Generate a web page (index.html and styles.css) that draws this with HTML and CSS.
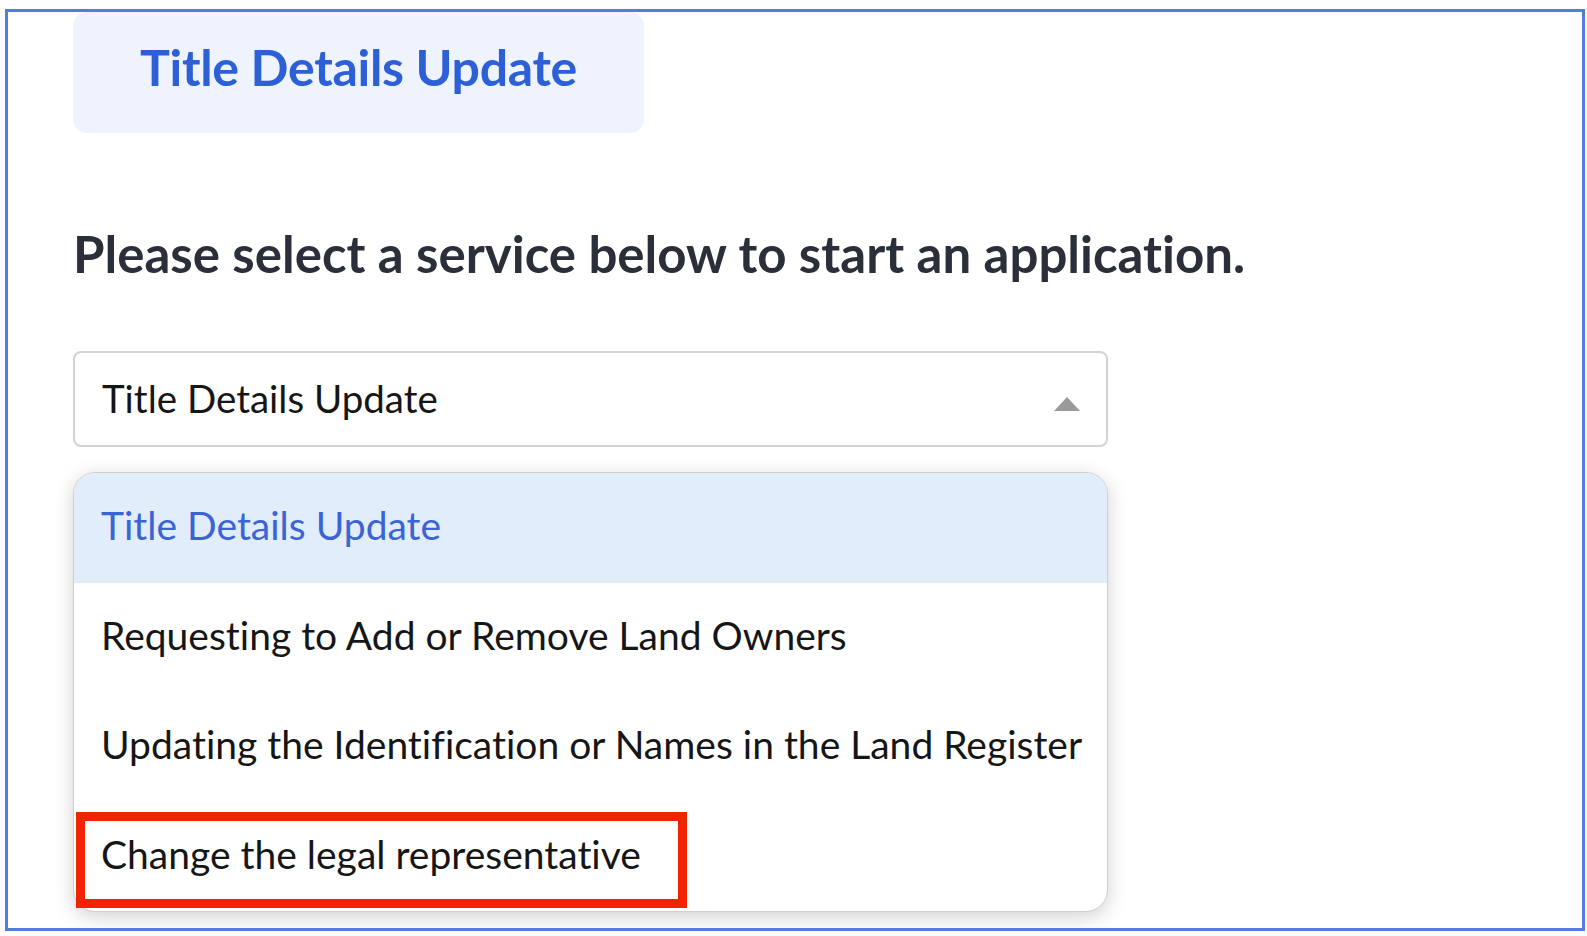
FILE: index.html
```html
<!DOCTYPE html>
<html lang="en">
<head>
<meta charset="utf-8">
<title>Title Details Update</title>
<link rel="stylesheet" href="styles.css">
</head>
<body>
<div class="frame">
  <div class="content">
    <div class="tab"><span class="tab-title">Title Details Update</span></div>
    <h2 class="prompt">Please select a service below to start an application.</h2>
    <div class="select">
      <span class="select-value">Title Details Update</span>
      <span class="caret"></span>
    </div>
    <ul class="menu">
      <li class="item active">Title Details Update</li>
      <li class="item">Requesting to Add or Remove Land Owners</li>
      <li class="item">Updating the Identification or Names in the Land Register</li>
      <li class="item last">Change the legal representative<span class="highlight"></span></li>
    </ul>
  </div>
</div>
</body>
</html>
```
FILE: styles.css
```css
* { box-sizing: border-box; }
html, body { margin: 0; padding: 0; background: #ffffff; }
body {
  font-family: "Lato", "Noto Sans", sans-serif;
  font-variant-ligatures: none;
}

.frame {
  margin: 9px 0 0 5px;
  width: 1580px;
  height: 922px;
  border: 3px solid #517edd;
  overflow: hidden;
  background: #fff;
}

.content {
  padding-left: 65px;
  display: flex;
  flex-direction: column;
  align-items: flex-start;
}

.tab {
  width: 571px;
  height: 121px;
  background: #eef3fd;
  border-radius: 14px;
  display: flex;
  align-items: center;
  justify-content: center;
  padding-bottom: 11px;
}
.tab-title {
  font-weight: 700;
  font-size: 50px;
  color: #2d5fd7;
  letter-spacing: -0.3px;
}

.prompt {
  margin: 90px 0 0 0;
  font-size: 51px;
  line-height: 1.2;
  font-weight: 700;
  color: #2a2f3a;
}

.select {
  margin-top: 67px;
  width: 1035px;
  height: 96px;
  border: 2px solid #d3d3d3;
  border-radius: 8px;
  display: flex;
  align-items: center;
  justify-content: space-between;
  padding: 0 26px 3px 27px;
}
.select-value {
  font-size: 38.5px;
  color: #161616;
}
.caret {
  width: 0;
  height: 0;
  border-left: 13px solid transparent;
  border-right: 13px solid transparent;
  border-bottom: 14px solid #9a9a9a;
  margin-top: 13px;
}

.menu {
  list-style: none;
  margin: 25px 0 0 0;
  padding: 0;
  width: 1035px;
  border: 1px solid #cfcfcf;
  border-radius: 22px;
  box-shadow: 0 5px 20px rgba(0, 0, 0, 0.18);
  background: #fff;
}
.item {
  position: relative;
  height: 109.5px;
  display: flex;
  align-items: center;
  padding: 0 0 5px 27px;
  font-size: 39px;
  color: #161616;
}
.item.active {
  background: #e1edfa;
  color: #3a63d6;
  border-radius: 21px 21px 0 0;
}
.item.last { border-radius: 0 0 21px 21px; }

.highlight {
  position: absolute;
  left: 2px;
  top: 10px;
  width: 611px;
  height: 96px;
  border: 9px solid #f02400;
  pointer-events: none;
}
```
